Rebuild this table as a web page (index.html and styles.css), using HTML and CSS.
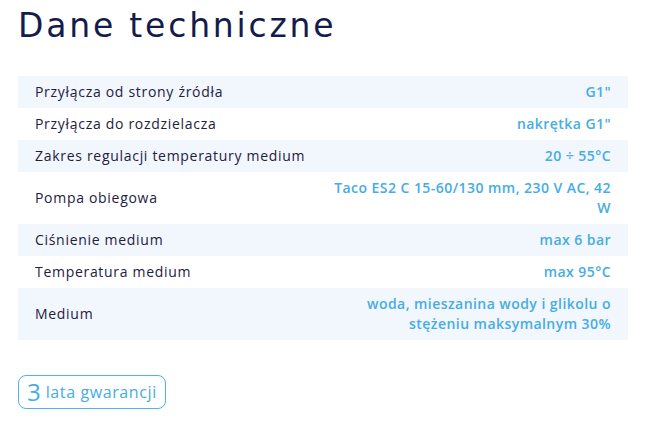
FILE: index.html
```html
<!DOCTYPE html>
<html lang="pl">
<head>
<meta charset="utf-8">
<link rel="stylesheet" href="styles.css">
</head>
<body>
<main class="page">
  <h1 class="title">Dane techniczne</h1>
  <table class="specs">
    <colgroup><col class="col-label"><col></colgroup>
    <tbody>
      <tr><td class="label">Przyłącza od strony źródła</td><td class="value">G1"</td></tr>
      <tr><td class="label">Przyłącza do rozdzielacza</td><td class="value">nakrętka G1"</td></tr>
      <tr><td class="label">Zakres regulacji temperatury medium</td><td class="value">20 ÷ 55°C</td></tr>
      <tr><td class="label">Pompa obiegowa</td><td class="value">Taco ES2 C 15-60/130 mm, 230 V AC, 42 W</td></tr>
      <tr><td class="label">Ciśnienie medium</td><td class="value">max 6 bar</td></tr>
      <tr><td class="label">Temperatura medium</td><td class="value">max 95°C</td></tr>
      <tr><td class="label">Medium</td><td class="value">woda, mieszanina wody i glikolu o stężeniu maksymalnym 30%</td></tr>
    </tbody>
  </table>
  <div class="badge"><span class="badge-num">3</span><span class="badge-text">lata gwarancji</span></div>
</main>
</body>
</html>
```
FILE: styles.css
```css
* { box-sizing: border-box; }
html, body { margin: 0; padding: 0; background: #fff; }
body { font-family: "Open Sans", "Noto Sans", sans-serif; }
.page { padding: 0 18px; }
.title {
  margin: 0;
  padding-top: 4px;
  height: 76px;
  font-family: "DejaVu Sans", "Open Sans", sans-serif;
  font-size: 33px;
  font-weight: 400;
  color: #141b4d;
  line-height: 44px;
  letter-spacing: 2.8px;
}
.specs {
  width: 610px;
  table-layout: fixed;
  border-collapse: collapse;
  font-size: 14px;
  line-height: 20px;
}
.col-label { width: 290px; }
.specs tr:nth-child(odd) { background: #f2f6fd; }
.specs td { padding: 6px 17px; vertical-align: middle; }
.label { color: #1e2140; white-space: nowrap; letter-spacing: 0.7px; }
.value { color: #45ade3; font-weight: 600; text-align: right; padding-left: 20px; letter-spacing: 0.45px; }
.badge {
  margin-top: 35px;
  display: inline-flex;
  align-items: center;
  gap: 5px;
  height: 34px;
  padding: 0 8px;
  border: 1px solid #4fb4e8;
  border-radius: 8px;
  color: #45ade3;
}
.badge-num { font-size: 24px; line-height: 1; }
.badge-text { font-size: 16px; line-height: 1; letter-spacing: 0.6px; }
```
